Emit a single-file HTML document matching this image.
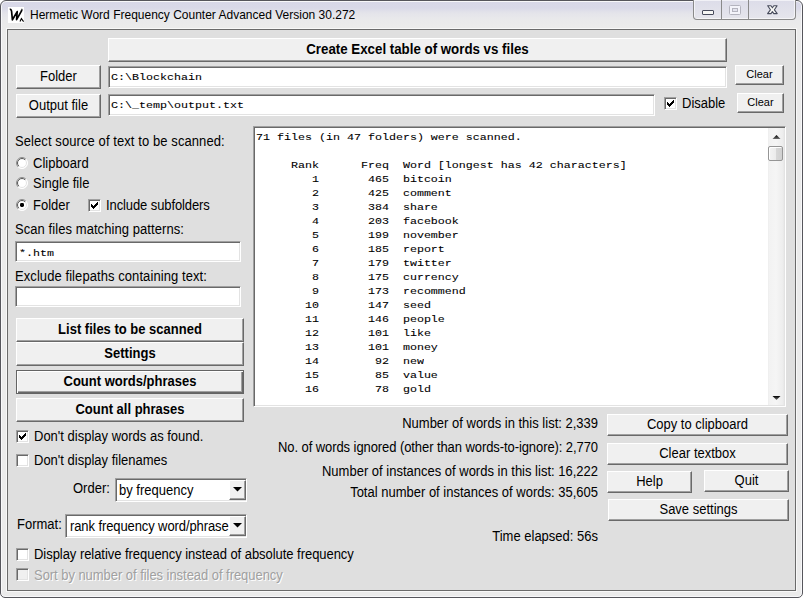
<!DOCTYPE html>
<html><head><meta charset="utf-8">
<style>
*{margin:0;padding:0;box-sizing:border-box}
html,body{width:803px;height:598px;overflow:hidden;background:#ffffff}
body{position:relative;font-family:"Liberation Sans",sans-serif;font-size:13px;color:#000}
.a{position:absolute}
#win{left:0;top:0;width:803px;height:598px;border:1px solid #56565c;box-shadow:inset 0 0 0 1px #f8f8fa;border-radius:6px 6px 5px 5px;
 background:linear-gradient(#f2f2f8 0,#f2f2f8 1px,#d8d8e8 1px,#d9d9e8 7px,#e4e4ea 12px,#e9e9eb 18px,#ebebeb 26px,#ebebeb 100%);overflow:hidden}
#client{left:7px;top:29px;width:789px;height:562px;border:1px solid #6a6a6a;background:#dfdfdf;box-shadow:0 0 0 1px #f8f8f8}
.t{position:absolute;font-size:13px;line-height:15px;white-space:nowrap;transform-origin:0 12px;transform:scaleY(1.07)}
.btn{position:absolute;background:#f0f0f0;border-top:1px solid #fff;border-left:1px solid #fff;border-right:1px solid #696969;border-bottom:1px solid #696969;box-shadow:inset -1px -1px 0 #a0a0a0;text-align:center;white-space:nowrap;font-size:13px}
.btn.def{border:1px solid #646464;box-shadow:inset 1px 1px 0 #fff,inset -1px -1px 0 #696969,inset -2px -2px 0 #a0a0a0}
.b{font-weight:bold}
.s{display:inline-block;transform:scaleY(1.07);transform-origin:50% 71%}
.edit{position:absolute;background:#fff;border-top:1px solid #a0a0a0;border-left:1px solid #a0a0a0;border-right:1px solid #fff;border-bottom:1px solid #fff;box-shadow:inset 1px 1px 0 #696969,inset -1px -1px 0 #e3e3e3}
.mono{font-family:"Liberation Mono",monospace;font-size:11.67px;white-space:pre;line-height:14px;padding-top:1px;-webkit-text-stroke:0.1px #000}
.chk{position:absolute;width:13px;height:13px;background:#fff;border-top:1px solid #a0a0a0;border-left:1px solid #a0a0a0;border-right:1px solid #fff;border-bottom:1px solid #fff;box-shadow:inset 1px 1px 0 #696969,inset -1px -1px 0 #e3e3e3}
.chk svg{position:absolute;left:2px;top:2px}
.rad{position:absolute;width:12px;height:12px}
.ln{height:14px;transform-origin:0 10.1px;transform:scaleY(0.8)}
</style></head><body>
<svg width="0" height="0" style="position:absolute"><defs><linearGradient id="ro" x1="0" y1="0" x2="1" y2="1"><stop offset="0.48" stop-color="#8a8a8a"/><stop offset="0.52" stop-color="#ffffff"/></linearGradient><linearGradient id="ri" x1="0" y1="0" x2="1" y2="1"><stop offset="0.48" stop-color="#555555"/><stop offset="0.52" stop-color="#e3e3e3"/></linearGradient></defs></svg>
<div id="win" class="a">
</div>
<!-- title -->
<svg class="a" style="left:8px;top:7px" width="16" height="16" viewBox="0 0 16 16"><rect x="0" y="0" width="16" height="16" fill="#fff"/><path d="M1.8,2.6 C2.8,2.2 3.4,2.8 3.6,4.5 L4.4,12.8 L9.2,4.6 L8.6,12.6 L13.4,4.2 C13.8,3.2 13.9,2.6 13.4,2.4" fill="none" stroke="#000" stroke-width="1.7" stroke-linejoin="round"/><path d="M12,14.6 L13.4,11.6 L15.6,14.6" fill="none" stroke="#000" stroke-width="1.1"/></svg>
<div class="t" style="left:30px;top:8px;font-size:12px;color:#000;transform-origin:0 11.7px;transform:scaleY(1.1)">Hermetic Word Frequency Counter Advanced Version 30.272</div>
<!-- caption buttons -->
<div class="a" style="left:693px;top:0;width:103px;height:20px;border:1px solid #8a8a8a;border-top:none;border-radius:0 0 4px 4px;background:linear-gradient(#dcdce9,#e6e6ec);box-shadow:inset 1px 1px 0 rgba(255,255,255,.6),inset -1px -1px 0 rgba(255,255,255,.6)"></div>
<div class="a" style="left:721px;top:0;width:1px;height:19px;background:#8a8a8a"></div>
<div class="a" style="left:748px;top:0;width:1px;height:19px;background:#8a8a8a"></div>
<div class="a" style="left:702px;top:10px;width:12px;height:5px;border:1.5px solid #474b5c;border-radius:1px;background:#f6f6f4"></div>
<div class="a" style="left:729px;top:5px;width:12px;height:10px;border:1.5px solid #b4b4be;border-radius:1.5px;background:#f4f4fa"><div class="a" style="left:1.5px;top:1.5px;width:6px;height:4px;border:1.5px solid #b4b4be;background:#e4e4ee"></div></div>
<svg class="a" style="left:762px;top:2px" width="22" height="16" viewBox="0 0 22 16"><polygon points="5.7,3.8 9,3.8 10.4,5.8 11.8,3.8 15.1,3.8 12.4,7.8 15.2,11.6 11.8,11.6 10.4,9.6 9,11.6 5.6,11.6 8.4,7.8" fill="#f8f8f6" stroke="#474b5c" stroke-width="1.1" stroke-linejoin="round"/></svg>

<div id="client" class="a"></div>

<!-- top rows -->
<div class="btn b" style="left:108px;top:38px;width:619px;height:24px;line-height:22px;font-size:13.3px"><span class="s">Create Excel table of words vs files</span></div>
<div class="btn" style="left:16px;top:65px;width:85px;height:24px;line-height:22px"><span class="s">Folder</span></div>
<div class="edit" style="left:108px;top:66px;width:619px;height:22px"><div class="mono a" style="left:2px;top:2px"><div class="ln">C:\Blockchain</div></div></div>
<div class="btn" style="left:735px;top:65px;width:49px;height:20px;line-height:17px;font-size:11px"><span class="s">Clear</span></div>
<div class="btn" style="left:16px;top:94px;width:85px;height:24px;line-height:22px"><span class="s">Output file</span></div>
<div class="edit" style="left:108px;top:94px;width:547px;height:22px"><div class="mono a" style="left:2px;top:2px"><div class="ln">C:\_temp\output.txt</div></div></div>
<div class="chk" style="left:664px;top:97px"><svg width="7" height="7" viewBox="0 0 7 7" shape-rendering="crispEdges"><path d="M0 2h1v3h-1zM1 3h1v3h-1zM2 4h1v3h-1zM3 3h1v3h-1zM4 2h1v3h-1zM5 1h1v3h-1zM6 0h1v3h-1z" fill="#000"/></svg></div>
<div class="t" style="left:682px;top:96px">Disable</div>
<div class="btn" style="left:737px;top:93px;width:47px;height:20px;line-height:17px;font-size:11px"><span class="s">Clear</span></div>

<!-- left column -->
<div class="t" style="left:15px;top:134px;letter-spacing:0.085px">Select source of text to be scanned:</div>
<svg class="rad" style="left:16px;top:157px" viewBox="0 0 12 12"><circle cx="6" cy="6" r="5.5" fill="#fff" stroke="url(#ro)"/><circle cx="6" cy="6" r="4.5" fill="none" stroke="url(#ri)"/></svg>
<div class="t" style="left:33px;top:156px">Clipboard</div>
<svg class="rad" style="left:16px;top:177px" viewBox="0 0 12 12"><circle cx="6" cy="6" r="5.5" fill="#fff" stroke="url(#ro)"/><circle cx="6" cy="6" r="4.5" fill="none" stroke="url(#ri)"/></svg>
<div class="t" style="left:33px;top:176px">Single file</div>
<svg class="rad" style="left:16px;top:199px" viewBox="0 0 12 12"><circle cx="6" cy="6" r="5.5" fill="#fff" stroke="url(#ro)"/><circle cx="6" cy="6" r="4.5" fill="none" stroke="url(#ri)"/><rect x="4" y="4" width="4" height="4" rx="1.4" fill="#000"/></svg>
<div class="t" style="left:33px;top:198px">Folder</div>
<div class="chk" style="left:88px;top:199px"><svg width="7" height="7" viewBox="0 0 7 7" shape-rendering="crispEdges"><path d="M0 2h1v3h-1zM1 3h1v3h-1zM2 4h1v3h-1zM3 3h1v3h-1zM4 2h1v3h-1zM5 1h1v3h-1zM6 0h1v3h-1z" fill="#000"/></svg></div>
<div class="t" style="left:106px;top:198px;letter-spacing:-0.1px">Include subfolders</div>
<div class="t" style="left:15px;top:222px;letter-spacing:0.07px">Scan files matching patterns:</div>
<div class="edit" style="left:15px;top:241px;width:226px;height:21px"><div class="mono a" style="left:3px;top:3px"><div class="ln">*.htm</div></div></div>
<div class="t" style="left:15px;top:269px;letter-spacing:0.075px">Exclude filepaths containing text:</div>
<div class="edit" style="left:15px;top:286px;width:226px;height:21px"></div>

<div class="btn b" style="left:16px;top:318px;width:228px;height:24px;line-height:22px"><span class="s">List files to be scanned</span></div>
<div class="btn b" style="left:16px;top:342px;width:228px;height:24px;line-height:22px"><span class="s">Settings</span></div>
<div class="btn b def" style="left:16px;top:370px;width:228px;height:24px;line-height:22px"><span class="s">Count words/phrases</span></div>
<div class="btn b" style="left:16px;top:398px;width:228px;height:24px;line-height:22px"><span class="s">Count all phrases</span></div>

<div class="chk" style="left:16px;top:430px"><svg width="7" height="7" viewBox="0 0 7 7" shape-rendering="crispEdges"><path d="M0 2h1v3h-1zM1 3h1v3h-1zM2 4h1v3h-1zM3 3h1v3h-1zM4 2h1v3h-1zM5 1h1v3h-1zM6 0h1v3h-1z" fill="#000"/></svg></div>
<div class="t" style="left:34px;top:429px">Don't display words as found.</div>
<div class="chk" style="left:16px;top:454px"></div>
<div class="t" style="left:34px;top:453px">Don't display filenames</div>

<div class="t" style="left:73px;top:481px">Order:</div>
<div class="edit" style="left:115px;top:478px;width:132px;height:24px"><div class="t" style="left:3px;top:4px">by frequency</div></div>
<div class="btn" style="left:229px;top:480px;width:17px;height:20px"><svg class="a" style="left:3px;top:6px" width="9" height="5" viewBox="0 0 9 5"><path d="M0 0 L9 0 L4.5 4.5 Z" fill="#000"/></svg></div>
<div class="t" style="left:17px;top:517px">Format:</div>
<div class="edit" style="left:65px;top:514px;width:182px;height:24px"><div class="t" style="left:4px;top:4px;letter-spacing:-0.1px">rank frequency word/phrase</div></div>

<div class="btn" style="left:229px;top:516px;width:17px;height:20px"><svg class="a" style="left:3px;top:6px" width="9" height="5" viewBox="0 0 9 5"><path d="M0 0 L9 0 L4.5 4.5 Z" fill="#000"/></svg></div>
<div class="chk" style="left:16px;top:548px"></div>
<div class="t" style="left:34px;top:547px;letter-spacing:-0.045px">Display relative frequency instead of absolute frequency</div>
<div class="chk" style="left:16px;top:568px;background:#f0f0f0"></div>
<div class="t" style="left:35px;top:569px;color:#fff;letter-spacing:-0.045px">Sort by number of files instead of frequency</div>
<div class="t" style="left:34px;top:568px;color:#a0a0a0;letter-spacing:-0.045px">Sort by number of files instead of frequency</div>

<!-- text area -->
<div class="edit" style="left:253px;top:126px;width:533px;height:281px">
<div class="mono a" style="left:2px;top:2px"><div class="ln">71 files (in 47 folders) were scanned.</div><div class="ln">&nbsp;</div><div class="ln">     Rank      Freq  Word [longest has 42 characters]</div><div class="ln">        1       465  bitcoin</div><div class="ln">        2       425  comment</div><div class="ln">        3       384  share</div><div class="ln">        4       203  facebook</div><div class="ln">        5       199  november</div><div class="ln">        6       185  report</div><div class="ln">        7       179  twitter</div><div class="ln">        8       175  currency</div><div class="ln">        9       173  recommend</div><div class="ln">       10       147  seed</div><div class="ln">       11       146  people</div><div class="ln">       12       101  like</div><div class="ln">       13       101  money</div><div class="ln">       14        92  new</div><div class="ln">       15        85  value</div><div class="ln">       16        78  gold</div></div>
</div>


<!-- scrollbar -->
<div class="a" style="left:768px;top:128px;width:16px;height:277px;background:linear-gradient(90deg,#ececec 0,#f2f2f2 1px,#f5f5f5 8px,#ededed 15px,#e6e6e6 16px)"></div>
<svg class="a" style="left:772px;top:134px" width="9" height="6" viewBox="0 0 9 6"><defs><linearGradient id="au" x1="0" y1="0" x2="0" y2="1"><stop offset="0" stop-color="#000"/><stop offset="1" stop-color="#707070"/></linearGradient></defs><path d="M0.5 5 L4.5 1 L8.5 5 Z" fill="url(#au)"/></svg>
<div class="a" style="left:768px;top:146px;width:15px;height:15px;border:1px solid #959595;border-radius:2px;background:linear-gradient(90deg,#f4f4f4 0,#ececec 50%,#d8d8d8 51%,#d0d0d0 100%);box-shadow:inset 1px 1px 0 #fff"></div>
<svg class="a" style="left:772px;top:395px" width="9" height="6" viewBox="0 0 9 6"><defs><linearGradient id="ad" x1="0" y1="0" x2="0" y2="1"><stop offset="0" stop-color="#000"/><stop offset="1" stop-color="#707070"/></linearGradient></defs><path d="M0.5 1 L4.5 5 L8.5 1 Z" fill="url(#ad)"/></svg>
<!-- right buttons & labels -->
<div class="t" style="right:205px;top:416px">Number of words in this list: 2,339</div>
<div class="t" style="right:205px;top:440px;letter-spacing:-0.08px">No. of words ignored (other than words-to-ignore): 2,770</div>
<div class="t" style="right:205px;top:464px">Number of instances of words in this list: 16,222</div>
<div class="t" style="right:205px;top:485px">Total number of instances of words: 35,605</div>
<div class="t" style="right:205px;top:529px">Time elapsed: 56s</div>

<div class="btn" style="left:607px;top:414px;width:181px;height:22px;line-height:20px"><span class="s">Copy to clipboard</span></div>
<div class="btn" style="left:607px;top:443px;width:181px;height:22px;line-height:20px"><span class="s">Clear textbox</span></div>
<div class="btn" style="left:607px;top:471px;width:85px;height:22px;line-height:20px"><span class="s">Help</span></div>
<div class="btn" style="left:704px;top:470px;width:85px;height:22px;line-height:20px"><span class="s">Quit</span></div>
<div class="btn" style="left:608px;top:499px;width:181px;height:22px;line-height:20px"><span class="s">Save settings</span></div>
</body></html>
